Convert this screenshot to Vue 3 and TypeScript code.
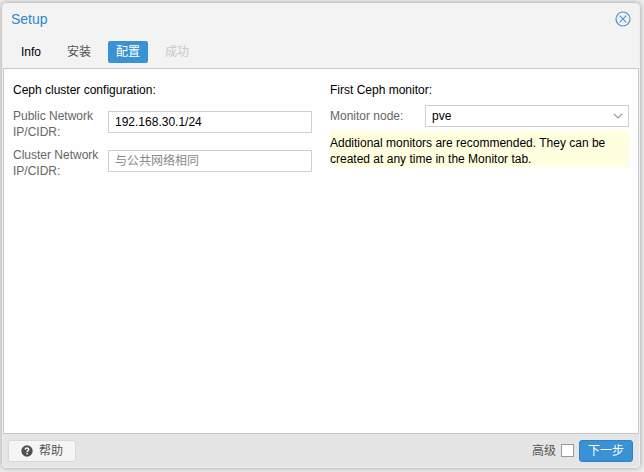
<script setup lang="ts">
import { ref } from 'vue'

interface Tab {
  id: string
  label: string
  disabled?: boolean
}

const tabs: Tab[] = [
  { id: 'info', label: 'Info' },
  { id: 'install', label: '安装' },
  { id: 'config', label: '配置' },
  { id: 'success', label: '成功', disabled: true },
]

const activeTab = ref('config')
const publicNetwork = ref('192.168.30.1/24')
const clusterNetwork = ref('')
const monitorNode = ref('pve')
const advanced = ref(false)
</script>

<template>
  <div class="backdrop">
    <section class="window" role="dialog" aria-labelledby="window-title">
      <header class="header">
        <div class="title-bar">
          <h1 id="window-title" class="title">Setup</h1>
          <button type="button" class="close" aria-label="Close">
            <svg viewBox="0 0 16 16" width="16" height="16" fill="none" stroke="currentColor">
              <circle cx="8" cy="8" r="7" stroke-width="1.2" />
              <path d="M4.7 4.7L11.3 11.3M11.3 4.7L4.7 11.3" stroke-width="1.1" />
            </svg>
          </button>
        </div>
        <nav class="tabs" role="tablist">
          <button
            v-for="tab in tabs"
            :key="tab.id"
            type="button"
            role="tab"
            class="tab"
            :class="[tab.id, { active: tab.id === activeTab }]"
            :aria-selected="tab.id === activeTab"
            :disabled="tab.disabled"
            @click="activeTab = tab.id"
          >
            {{ tab.label }}
          </button>
        </nav>
      </header>

      <form id="ceph-form" class="body" @submit.prevent>
        <div class="column">
          <h2 class="heading">Ceph cluster configuration:</h2>
          <div class="fields">
            <div class="field">
              <label for="public-network">Public Network IP/CIDR:</label>
              <input id="public-network" v-model="publicNetwork" class="control" type="text" />
            </div>
            <div class="field">
              <label for="cluster-network">Cluster Network IP/CIDR:</label>
              <input
                id="cluster-network"
                v-model="clusterNetwork"
                class="control"
                type="text"
                placeholder="与公共网络相同"
              />
            </div>
          </div>
        </div>

        <div class="column">
          <h2 class="heading">First Ceph monitor:</h2>
          <div class="monitor">
            <label for="monitor-node">Monitor node:</label>
            <div class="combo">
              <select id="monitor-node" v-model="monitorNode" class="control">
                <option value="pve">pve</option>
              </select>
              <svg class="arrow" viewBox="0 0 10 6" width="10" height="6" fill="none" stroke="currentColor">
                <path d="M1 1L5 5L9 1" stroke-width="1.2" />
              </svg>
            </div>
          </div>
          <p class="note">
            Additional monitors are recommended. They can be created at any time in the Monitor tab.
          </p>
        </div>
      </form>

      <footer class="footer">
        <button type="button" class="button help">
          <svg viewBox="0 0 12 12" width="12" height="12">
            <circle cx="6" cy="6" r="5.7" fill="#505050" />
            <path d="M4.2 4.6C4.3 3.4 5 2.9 6 2.9C7.1 2.9 7.8 3.5 7.8 4.4C7.8 5.6 6.1 5.6 6.1 7" fill="none" stroke="#f5f5f5" stroke-width="1.5" />
            <rect x="5.3" y="7.8" width="1.6" height="1.5" fill="#f5f5f5" />
          </svg>
          帮助
        </button>
        <div class="actions">
          <label class="advanced">
            高级
            <input v-model="advanced" type="checkbox" class="check" />
          </label>
          <button type="submit" form="ceph-form" class="button next">下一步</button>
        </div>
      </footer>
    </section>
  </div>
</template>

<style>
body {
  margin: 0;
}
</style>

<style scoped>
.backdrop {
  box-sizing: border-box;
  display: flex;
  min-height: 100vh;
  padding: 3px 4px 4px 2px;
  background: #ececec;
  font: 12px/16px "Liberation Sans", "Noto Sans CJK SC", sans-serif;
  color: #000;
}

.backdrop * {
  box-sizing: border-box;
}

button,
input,
select {
  margin: 0;
  font: inherit;
}

.window {
  display: flex;
  flex: 1;
  flex-direction: column;
  min-width: 0;
  border: 1px solid #f0f0f0;
  border-radius: 4px;
  background: #f3f3f3;
  box-shadow: 0 0 5px #999;
}

.header {
  padding: 5px 8px;
}

.title-bar {
  display: flex;
  align-items: center;
  justify-content: space-between;
  height: 20px;
}

.title {
  margin: 0;
  font-size: 14px;
  font-weight: 400;
  line-height: 20px;
  color: #3086cc;
}

.close {
  display: flex;
  padding: 0;
  border: 0;
  background: none;
  color: #4792d3;
}

.tabs {
  display: flex;
  gap: 9px;
  margin-top: 12px;
}

.tab {
  height: 22px;
  padding: 0 8px;
  border: 0;
  border-radius: 2px;
  background: transparent;
  color: #505050;
}

.tab.info {
  padding: 0 9px 0 10px;
  color: #000;
}

.tab.active {
  background: #3892d4;
  color: #fff;
}

.tab:disabled {
  color: #c8c8c8;
}

.body {
  display: grid;
  flex: 1;
  grid-template-columns: 1fr 1fr;
  align-items: start;
  gap: 18px;
  padding: 13px 9px;
  border: 1px solid #c8c8c8;
  background: #fefefe;
}

.heading {
  margin: 0;
  font-size: 12px;
  font-weight: 400;
}

.fields {
  display: grid;
  gap: 7px;
  margin-top: 10px;
}

.field,
.monitor {
  display: grid;
  grid-template-columns: 90px 1fr;
  gap: 5px;
}

.field .control {
  margin-top: 3px;
}

.field label,
.monitor label {
  color: #666;
}

.control {
  display: block;
  width: 100%;
  height: 22px;
  padding: 0 6px;
  border: 1px solid #cfcfcf;
  border-radius: 0;
  background: #fff;
  color: #000;
}

.control::placeholder {
  color: #888;
  opacity: 1;
}

.monitor {
  align-items: center;
  margin-top: 7px;
}

.combo {
  position: relative;
}

.combo .control {
  appearance: none;
}

.arrow {
  position: absolute;
  top: 8px;
  right: 6px;
  color: #999;
  pointer-events: none;
}

.note {
  margin: 4px 0 0;
  padding-top: 4px;
  background: #ffffe0;
}

.footer {
  display: flex;
  align-items: center;
  justify-content: space-between;
  height: 33px;
  padding: 0 6px 0 5px;
  border-radius: 0 0 4px 4px;
  background: #e5e5e5;
}

.button {
  height: 22px;
  border: 1px solid #d8d8d8;
  border-radius: 3px;
}

.help {
  display: flex;
  align-items: center;
  gap: 6px;
  padding: 0 12px;
  background: #f5f5f5;
  color: #555;
}

.actions,
.advanced {
  display: flex;
  align-items: center;
  gap: 5px;
  color: #555;
}

.check {
  width: 13px;
  height: 13px;
  border: 1px solid #999;
  background: #fff;
  appearance: none;
}

.check:checked {
  background: #3892d4;
}

.next {
  padding: 0 8px;
  border-color: #2a83c8;
  background: #3892d4;
  color: #fff;
}
</style>
